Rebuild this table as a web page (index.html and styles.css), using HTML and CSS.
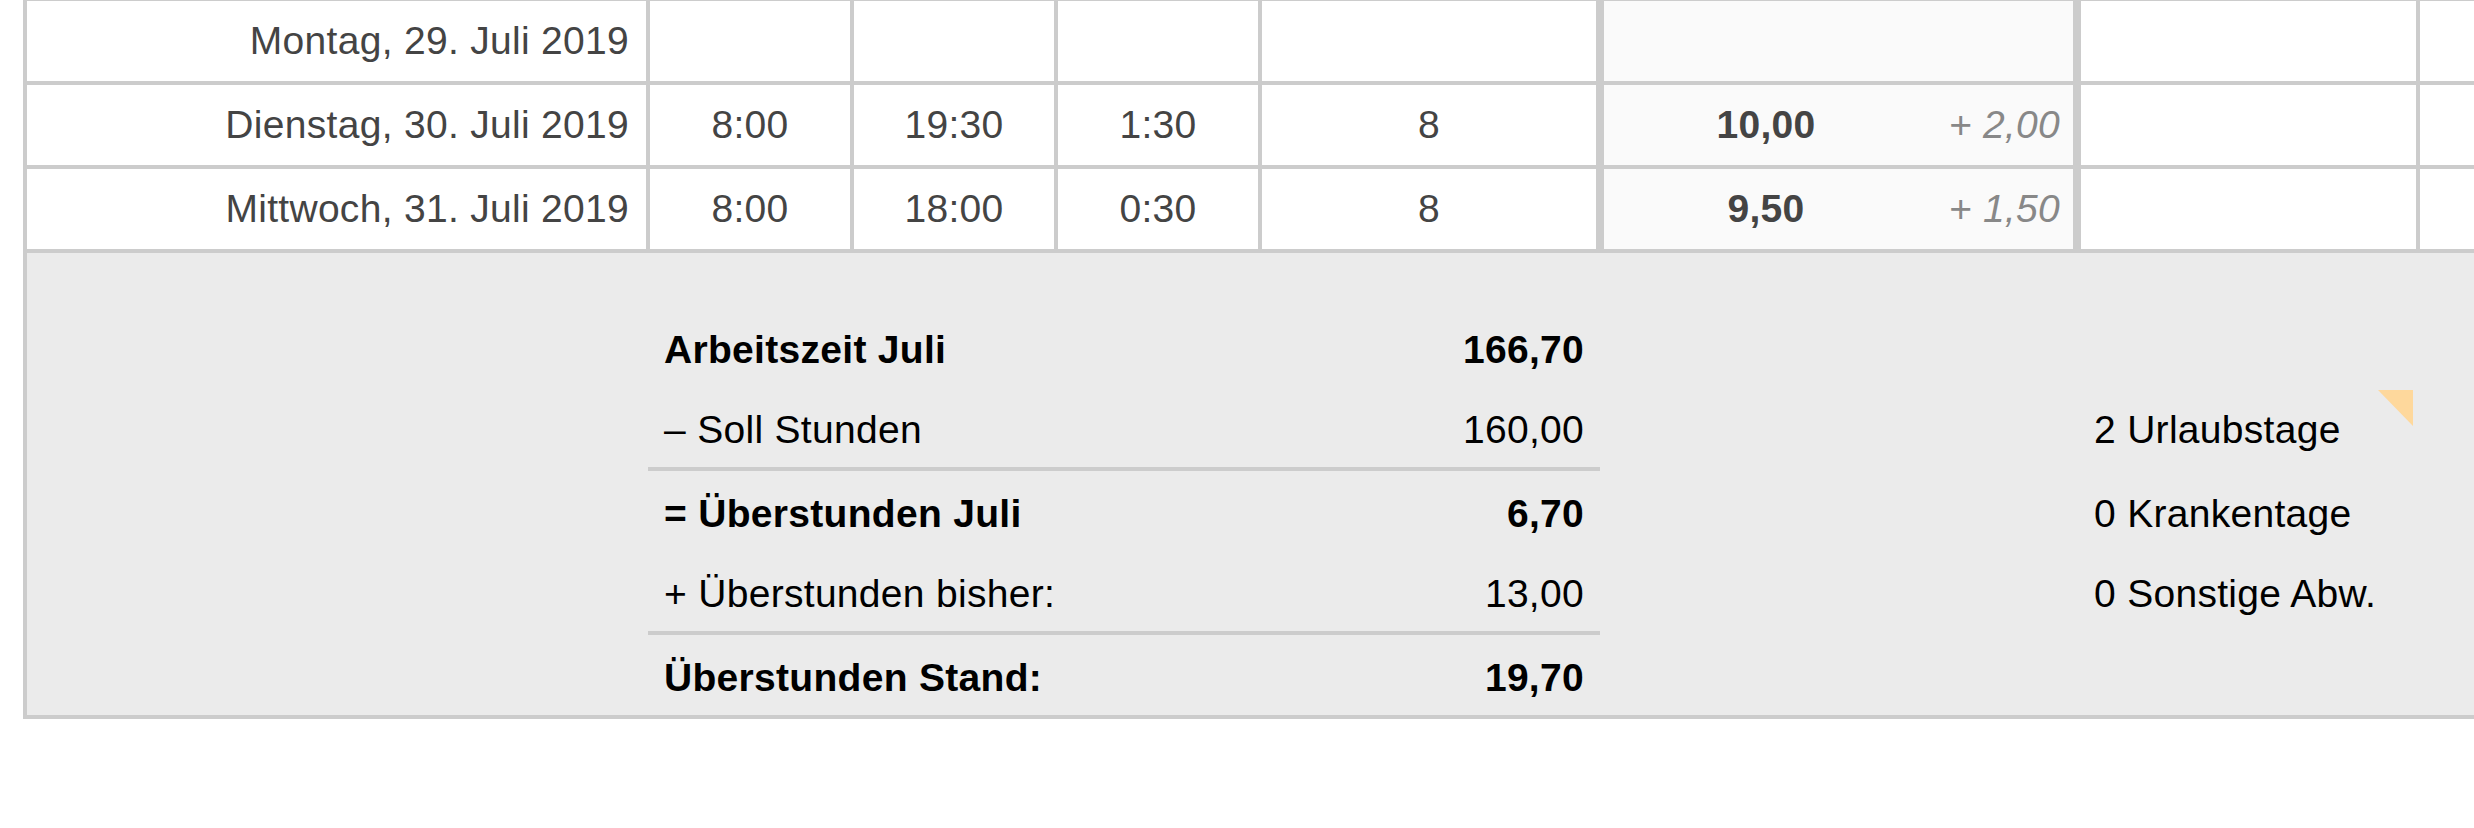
FILE: index.html
```html
<!DOCTYPE html>
<html>
    <head>
        <meta name="viewport" content="width=device-width, initial-scale=1" />
        <link rel="stylesheet" href="styles.css">
    </head>
    <body>
        <div class="sheet">
            <table class="days">
                <colgroup>
                    <col class="c-date">
                    <col class="c-time">
                    <col class="c-time">
                    <col class="c-time">
                    <col class="c-target">
                    <col class="c-hours">
                    <col class="c-diff">
                    <col class="c-note">
                    <col class="c-note">
                </colgroup>
                <tr>
                    <td class="date">Montag, 29. Juli 2019</td>
                    <td></td>
                    <td></td>
                    <td></td>
                    <td class="target"></td>
                    <td class="hours"></td>
                    <td class="diff"></td>
                    <td></td>
                    <td></td>
                </tr>
                <tr>
                    <td class="date">Dienstag, 30. Juli 2019</td>
                    <td>8:00</td>
                    <td>19:30</td>
                    <td>1:30</td>
                    <td class="target">8</td>
                    <td class="hours">10,00</td>
                    <td class="diff">+ 2,00</td>
                    <td></td>
                    <td></td>
                </tr>
                <tr>
                    <td class="date">Mittwoch, 31. Juli 2019</td>
                    <td>8:00</td>
                    <td>18:00</td>
                    <td>0:30</td>
                    <td class="target">8</td>
                    <td class="hours">9,50</td>
                    <td class="diff">+ 1,50</td>
                    <td></td>
                    <td></td>
                </tr>
            </table>

            <!-- monthly totals -->
            <div class="summary">
                <table class="totals">
                    <colgroup>
                        <col class="s-pad">
                        <col class="s-label">
                        <col class="s-num">
                        <col class="s-gap">
                        <col class="s-absence">
                    </colgroup>
                    <tr class="strong">
                        <td></td>
                        <td class="label">Arbeitszeit Juli</td>
                        <td class="num">166,70</td>
                        <td></td>
                        <td></td>
                    </tr>
                    <tr>
                        <td></td>
                        <td class="label">– Soll Stunden</td>
                        <td class="num">160,00</td>
                        <td></td>
                        <td class="absence">2 Urlaubstage<span class="flag"></span></td>
                    </tr>
                    <tr class="strong ruled">
                        <td></td>
                        <td class="label">= Überstunden Juli</td>
                        <td class="num">6,70</td>
                        <td></td>
                        <td class="absence">0 Krankentage</td>
                    </tr>
                    <tr>
                        <td></td>
                        <td class="label">+ Überstunden bisher:</td>
                        <td class="num">13,00</td>
                        <td></td>
                        <td class="absence">0 Sonstige Abw.</td>
                    </tr>
                    <tr class="strong ruled">
                        <td></td>
                        <td class="label">Überstunden Stand:</td>
                        <td class="num">19,70</td>
                        <td></td>
                        <td></td>
                    </tr>
                </table>
            </div>
        </div>
    </body>
</html>
```

FILE: styles.css
```css
* {
    padding: 0;
    margin: 0;
    box-sizing: border-box;
}

:root {
    --line: #cccccc;
    --ink: #444444;
}

body {
    background: #ffffff;
    font-family: "Liberation Sans", Arial, sans-serif;
    font-size: 39px;
    letter-spacing: 0.3px;
    overflow: hidden;
}

div.sheet {
    margin-left: 23px;
    margin-top: -3px;
    width: 2800px;
    border-left: 4px solid var(--line);
}

table {
    border-collapse: separate;
    border-spacing: 0;
    table-layout: fixed;
}

/* day rows */
table.days {
    width: 2732px;
    color: var(--ink);
    border-top: 4px solid var(--line);
}
col.c-date { width: 623px; }
col.c-time { width: 204px; }
col.c-target { width: 342px; }
col.c-hours { width: 324px; }
col.c-diff { width: 153px; }
col.c-note { width: 339px; }

table.days td {
    height: 84px;
    line-height: 80px;
    text-align: center;
    white-space: nowrap;
    border-right: 4px solid var(--line);
    border-bottom: 4px solid var(--line);
}
table.days td.date {
    text-align: right;
    padding-right: 17px;
}
table.days td.target {
    border-right-width: 8px;
}
table.days td.hours {
    background: #fafafa;
    font-weight: bold;
    border-right: none;
}
table.days td.diff {
    background: #fafafa;
    text-align: right;
    padding-right: 13px;
    font-style: italic;
    color: #888888;
    border-right-width: 8px;
}

/* totals block */
div.summary {
    background: #ebebeb;
    padding-top: 54px;
    border-bottom: 4px solid var(--line);
    color: #000000;
}
table.totals {
    width: 2400px;
}
col.s-pad { width: 621px; }
col.s-label { width: 600px; }
col.s-num { width: 352px; }
col.s-gap { width: 481px; }
col.s-absence { width: 346px; }

table.totals td {
    height: 80px;
    padding-top: 6px;
    line-height: 74px;
    white-space: nowrap;
}
table.totals tr.strong td.label,
table.totals tr.strong td.num {
    font-weight: bold;
}
table.totals td.label {
    padding-left: 16px;
}
table.totals td.num {
    text-align: right;
    padding-right: 16px;
}
table.totals tr.ruled td {
    height: 84px;
    border-top: 4px solid transparent;
}
table.totals tr.ruled td.label,
table.totals tr.ruled td.num {
    border-top-color: var(--line);
}
table.totals td.absence {
    position: relative;
    padding-left: 13px;
}

/* comment marker */
span.flag {
    position: absolute;
    top: 3px;
    right: 14px;
    width: 0;
    height: 0;
    border-top: 36px solid #fed89c;
    border-left: 35px solid transparent;
}
```
